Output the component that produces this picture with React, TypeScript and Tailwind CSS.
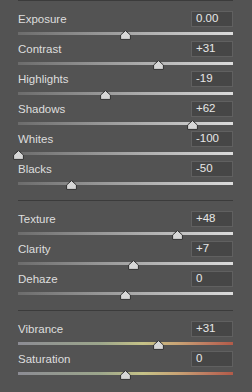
import React from "react";

type Row = { label: string; value: string; num: number; color?: boolean };

const sections: Row[][] = [
  [
    { label: "Exposure", value: "0.00", num: 0 },
    { label: "Contrast", value: "+31", num: 31 },
    { label: "Highlights", value: "-19", num: -19 },
    { label: "Shadows", value: "+62", num: 62 },
    { label: "Whites", value: "-100", num: -100 },
    { label: "Blacks", value: "-50", num: -50 },
  ],
  [
    { label: "Texture", value: "+48", num: 48 },
    { label: "Clarity", value: "+7", num: 7 },
    { label: "Dehaze", value: "0", num: 0 },
  ],
  [
    { label: "Vibrance", value: "+31", num: 31, color: true },
    { label: "Saturation", value: "0", num: 0, color: true },
  ],
];

function Thumb({ num }: { num: number }) {
  const x = ((num + 100) / 200) * 215;
  return (
    <svg
      className="absolute top-[-2px]"
      style={{ left: x - 5.5 }}
      width="11"
      height="10"
      viewBox="0 0 11 10"
    >
      <path
        d="M5.5 0.6 L10.4 5 L10.4 9.4 L0.6 9.4 L0.6 5 Z"
        fill="#d6d6d6"
        stroke="#2f2f2f"
        strokeWidth="1"
      />
    </svg>
  );
}

function SliderRow({ r }: { r: Row }) {
  return (
    <div className="flex flex-col h-[30px]">
      <div className="flex items-center justify-between h-[16px]">
        <span className="text-[11.5px] leading-none text-[#dedede] pt-[1px]">{r.label}</span>
        <div className="w-[42px] h-[16px] bg-[#464646] border border-[#606060] flex items-center pl-[4px] text-[11.5px] leading-none text-[#e6e6e6]">
          {r.value}
        </div>
      </div>
      <div
        className={
          "relative mt-[5px] h-[3px] w-[215px] " +
          (r.color
            ? "bg-[linear-gradient(to_right,#8c8c94_0%,#9ca68c_38%,#c6c388_58%,#c9a475_74%,#be7a60_88%,#b25a48_100%)]"
            : "bg-[linear-gradient(to_right,#6c6c6c,#dcdcdc)]")
        }
      >
        <Thumb num={r.num} />
      </div>
    </div>
  );
}

export default function App() {
  return (
    <div
      className="w-[252px] h-[392px] bg-[#535353] overflow-hidden pl-[18px]"
      style={{ fontFamily: '"Liberation Sans", Arial, sans-serif' }}
    >
      <div className="w-[215px]">
        {sections.map((s, i) => (
          <div key={i} className="border-t border-[#3b3b3b] pt-[10px] pb-[9px]">
            {s.map((r) => (
              <SliderRow key={r.label} r={r} />
            ))}
          </div>
        ))}
      </div>
    </div>
  );
}
